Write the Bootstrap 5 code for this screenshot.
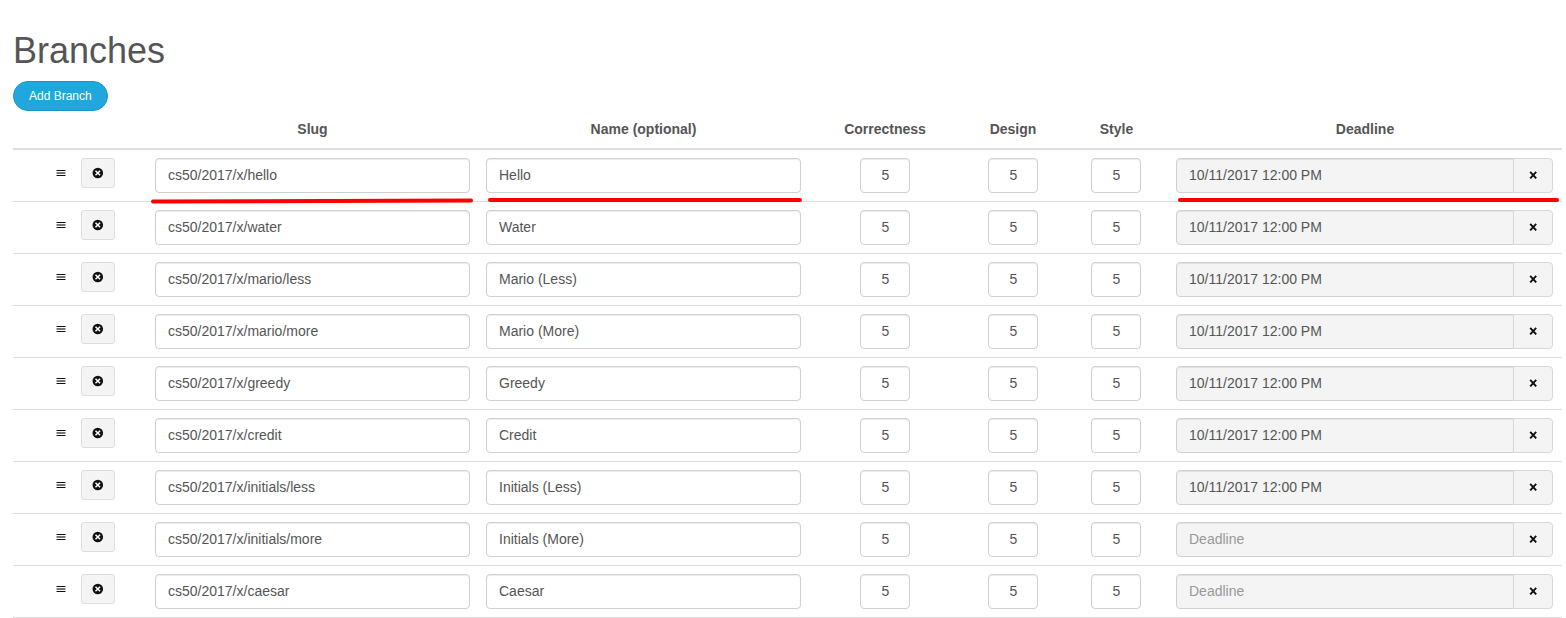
<!DOCTYPE html>
<html lang="en">
<head>
<meta charset="utf-8">
<meta name="viewport" content="width=device-width, initial-scale=1">
<title>Branches</title>
<link href="https://cdn.jsdelivr.net/npm/bootstrap@5.3.0/dist/css/bootstrap.min.css" rel="stylesheet">
<style>
  body { font: 14px/20px "Liberation Sans", Arial, sans-serif; color: #555; background: #fff; overflow: hidden; }
  .page { padding: 31px 0 0 13px; width: 1562px; }
  h1 { font-size: 36px; line-height: 40px; font-weight: 400; margin: 0 0 10px; }
  .btn-add { font-size: 12px; line-height: 18px; padding: 5px 16px 5px 15px; border-radius: 15px; color: #fff; background: #1fa7de; border: 1px solid #1a95c8; width: 95px; height: 30px; display: block; white-space: nowrap; }
  .branches { table-layout: fixed; width: 1549px; margin: 0; color: #555; --bs-table-color: #555; border-color: #ddd; }
  .branches > thead > tr > th { padding: 6px 8px 9px; line-height: 20px; text-align: center; border-bottom: 2px solid #ddd; height: 38px; }
  .branches > tbody { border-top: 0; }
  .branches > tbody > tr > td { padding: 8px; height: 52px; border-bottom: 1px solid #ddd; position: relative; vertical-align: top; }
  .branches > tbody > tr > td:last-child { padding-right: 9px; }
  .form-control { height: 35px; font-size: 14px; line-height: 20px; padding: 5px 12px 7px; color: #555; border: 1px solid #d0d0d0; border-radius: 4px; box-shadow: inset 0 1px 1px rgba(0,0,0,.075); }
  .form-control[readonly] { background: #f4f4f4; }
  .form-control::placeholder { color: #999; }
  .score { width: 50px; text-align: center; margin: 0 auto; padding-right: 11px; }
  td:nth-child(6) .score { margin-left: 18px; }
  .btn-soft { background: #f4f4f4; border: 1px solid #ddd; border-radius: 3px; color: #111; }
  .btn-remove { width: 34px; height: 30px; padding: 0; }
  .btn-clear { width: 40px; height: 35px; padding: 0 0 2px; border-radius: 4px; border-color: #d8d8d8; }
  .tools { padding-left: 35px; gap: 14px; }
  .grip { width: 11px; height: 30px; }
  .mark-line { position: absolute; height: 6px; pointer-events: none; z-index: 8; }
  .mark-slug { left: 4px; bottom: -3px; width: 322px; }
  .mark-name { left: 10px; bottom: -2px; width: 314px; }
  .mark-deadline { left: 10px; bottom: -2px; width: 381px; }
</style>
</head>
<body>
<main class="page">
  <h1>Branches</h1>
  <button type="button" class="btn btn-add">Add Branch</button>
  <table class="table branches">
    <colgroup>
      <col style="width:134px"><col style="width:331px"><col style="width:331px"><col style="width:152px"><col style="width:104px"><col style="width:103px"><col style="width:394px">
    </colgroup>
    <thead>
      <tr><th></th><th>Slug</th><th>Name (optional)</th><th>Correctness</th><th>Design</th><th>Style</th><th>Deadline</th></tr>
    </thead>
    <tbody id="rows"></tbody>
  </table>
</main>
<script src="https://cdn.jsdelivr.net/npm/bootstrap@5.3.0/dist/js/bootstrap.bundle.min.js"></script>
<script>
  const due = '10/11/2017 12:00 PM';
  const branches = [
    ['hello', 'Hello', due], ['water', 'Water', due], ['mario/less', 'Mario (Less)', due],
    ['mario/more', 'Mario (More)', due], ['greedy', 'Greedy', due], ['credit', 'Credit', due],
    ['initials/less', 'Initials (Less)', due], ['initials/more', 'Initials (More)', ''], ['caesar', 'Caesar', '']
  ];
  const line = (name, w, y1, y2) => `<svg class="mark-line mark-${name}" viewBox="0 0 ${w} 6"><path d="M2 ${y1}L${w - 2} ${y2}" stroke="#f00" stroke-width="4" stroke-linecap="round"/></svg>`;
  const score = '<td><input class="form-control score" value="5" aria-label="Score"></td>';
  document.getElementById('rows').innerHTML = branches.map(([slug, name, date], i) => `
    <tr>
      <td><div class="d-flex tools">
        <svg class="grip" viewBox="0 0 11 30"><path d="M.5 12.5h9M.5 17.5h9" stroke="#111"/><path d="M.5 15h9" stroke="#777" stroke-width="2"/></svg>
        <button type="button" class="btn btn-soft btn-remove d-flex align-items-center justify-content-center" aria-label="Remove">
          <svg width="12" height="12" viewBox="0 0 12 12"><circle cx="5.8" cy="6" r="5.3" fill="#111"/><path d="M3.5 3.7l4.6 4.6M8.1 3.7L3.5 8.3" stroke="#fff" stroke-width="1.5"/></svg>
        </button>
      </div></td>
      <td><input class="form-control" value="cs50/2017/x/${slug}" aria-label="Slug">${i ? '' : line('slug', 322, 3.4, 2.6)}</td>
      <td><input class="form-control" value="${name}" aria-label="Name">${i ? '' : line('name', 314, 3, 3)}</td>
      ${score.repeat(3)}
      <td><div class="input-group flex-nowrap">
        <input class="form-control" value="${date}" placeholder="Deadline" readonly>
        <button type="button" class="btn btn-soft btn-clear d-flex align-items-center justify-content-center" aria-label="Clear">
          <svg width="8" height="8" viewBox="0 0 8 8"><path d="M1.2 .8L7.2 7.4M7.2 .8L1.2 7.4" stroke="#111" stroke-width="1.9"/></svg>
        </button>
      </div>${i ? '' : line('deadline', 381, 3, 3)}</td>
    </tr>`).join('');
</script>
</body>
</html>
